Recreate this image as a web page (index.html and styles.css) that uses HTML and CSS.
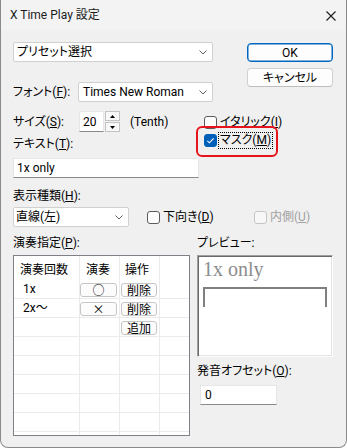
FILE: index.html
```html
<!DOCTYPE html>
<html lang="ja">
<head>
<meta charset="utf-8">
<link rel="stylesheet" href="styles.css">
</head>
<body>
<div class="window">
  <div class="titlebar">
    <span class="title">X Time Play 設定</span>
    <svg class="close" width="10" height="10" viewBox="0 0 10 10"><path d="M0.5 0.5 L9.5 9.5 M9.5 0.5 L0.5 9.5" stroke="#1b1b1b" stroke-width="1.1" fill="none"/></svg>
  </div>
  <div class="body">
    <div class="top">
      <div class="left">
        <div class="combo preset"><span>プリセット選択</span><svg class="chev" width="8" height="5" viewBox="0 0 8 5"><path d="M0.5 0.5 L4 4 L7.5 0.5" stroke="#606060" fill="none"/></svg></div>
        <div class="row font-row">
          <span class="lbl w65">フォント(<u>F</u>):</span>
          <div class="combo font-combo"><span>Times New Roman</span><svg class="chev" width="8" height="5" viewBox="0 0 8 5"><path d="M0.5 0.5 L4 4 L7.5 0.5" stroke="#606060" fill="none"/></svg></div>
        </div>
        <div class="mid">
          <div class="size-col">
            <div class="row size-row">
              <span class="lbl w66">サイズ(<u>S</u>):</span>
              <div class="edit size-edit">20</div>
              <div class="spin">
                <div class="spin-btn"><svg width="5" height="3" viewBox="0 0 5 3"><path d="M2.5 0 L5 3 L0 3 Z" fill="#000"/></svg></div>
                <div class="spin-btn"><svg width="5" height="3" viewBox="0 0 5 3"><path d="M0 0 L5 0 L2.5 3 Z" fill="#000"/></svg></div>
              </div>
              <span class="unit">(Tenth)</span>
            </div>
            <div class="lbl text-label">テキスト(<u>T</u>):</div>
          </div>
          <div class="checks">
            <div class="check"><span class="box"></span><span>イタリック(<u>I</u>)</span></div>
            <div class="check mask"><span class="box checked"><svg width="13" height="13" viewBox="0 0 13 13"><path d="M3.3 6.8 L5.4 8.8 L9.6 4.4" stroke="#fff" stroke-width="1.1" fill="none"/></svg></span><span class="focus">マスク(<u>M</u>)</span></div>
          </div>
        </div>
        <div class="edit text-edit">1x only</div>
      </div>
      <div class="buttons">
        <div class="btn ok">OK</div>
        <div class="btn">キャンセル</div>
      </div>
    </div>

    <div class="lbl disp-label">表示種類(<u>H</u>):</div>
    <div class="disp-row">
      <div class="combo disp-combo"><span>直線(左)</span><svg class="chev" width="8" height="5" viewBox="0 0 8 5"><path d="M0.5 0.5 L4 4 L7.5 0.5" stroke="#606060" fill="none"/></svg></div>
      <div class="check"><span class="box"></span><span>下向き(<u>D</u>)</span></div>
      <div class="check disabled"><span class="box"></span><span>内側(<u>U</u>)</span></div>
    </div>

    <div class="bottom">
      <div class="play-col">
        <div class="lbl sect-label">演奏指定(<u>P</u>):</div>
        <div class="grid">
          <div class="gr head"><div class="c c1">演奏回数</div><div class="c c2">演奏</div><div class="c c3">操作</div><div class="c c4"></div></div>
          <div class="gr"><div class="c c1 t">1x</div><div class="c c2"><div class="mini wide">○</div></div><div class="c c3"><div class="mini">削除</div></div><div class="c c4"></div></div>
          <div class="gr"><div class="c c1 t">2x〜</div><div class="c c2"><div class="mini wide">×</div></div><div class="c c3"><div class="mini">削除</div></div><div class="c c4"></div></div>
          <div class="gr"><div class="c c1"></div><div class="c c2"></div><div class="c c3"><div class="mini">追加</div></div><div class="c c4"></div></div>
          <div class="gr"><div class="c c1"></div><div class="c c2"></div><div class="c c3"></div><div class="c c4"></div></div>
          <div class="gr"><div class="c c1"></div><div class="c c2"></div><div class="c c3"></div><div class="c c4"></div></div>
          <div class="gr"><div class="c c1"></div><div class="c c2"></div><div class="c c3"></div><div class="c c4"></div></div>
          <div class="gr"><div class="c c1"></div><div class="c c2"></div><div class="c c3"></div><div class="c c4"></div></div>
          <div class="gr"><div class="c c1"></div><div class="c c2"></div><div class="c c3"></div><div class="c c4"></div></div>
          <div class="gr"><div class="c c1"></div><div class="c c2"></div><div class="c c3"></div><div class="c c4"></div></div>
        </div>
      </div>
      <div class="preview-col">
        <div class="lbl sect-label">プレビュー:</div>
        <div class="preview">
          <div class="pv-text">1x only</div>
          <div class="pv-mask"></div>
        </div>
        <div class="lbl offset-label">発音オフセット(<u>O</u>):</div>
        <div class="edit offset-edit">0</div>
      </div>
    </div>
  </div>
</div>
</body>
</html>
```

FILE: styles.css
```css
* { box-sizing: border-box; }
html, body { margin: 0; padding: 0; background: #ffffff; }
body {
  font-family: Roboto, "Noto Sans CJK JP", sans-serif;
  font-size: 12px;
  line-height: 16px;
  color: #000;
  font-feature-settings: "palt";
}
u { text-decoration: underline; text-underline-offset: 1px; text-decoration-thickness: 1px; }

.window {
  width: 347px;
  height: 448px;
  border: 1px solid #8a8a8a;
  border-top: none;
  border-radius: 0 0 8px 8px;
  background: #f0f0f0;
  overflow: hidden;
}
.titlebar {
  height: 30px;
  background: #f3f3f3;
  display: flex;
  align-items: center;
  justify-content: space-between;
  padding: 0 10px 0 9px;
}
.title { font-size: 12px; color: #1b1b1b; }
.close { display: block; margin-top: 1px; }

.body { padding: 12px 13px 0 12px; }

.top { display: flex; justify-content: space-between; }
.left { width: 200px; }
.buttons { width: 86px; margin-top: 1px; display: flex; flex-direction: column; gap: 6px; }
.btn {
  height: 19px;
  border: 1px solid #d0d0d0;
  border-bottom-color: #bdbdbd;
  border-radius: 4px;
  background: #fdfdfd;
  display: flex; align-items: center; justify-content: center;
  font-size: 12px;
}
.btn.ok { border-color: #0067c0; box-shadow: inset 0 0 0 0.5px #0067c0; }

.row { display: flex; align-items: center; }
.lbl { white-space: nowrap; }
.w65 { width: 65px; }
.w66 { width: 66px; }

.combo {
  height: 20px;
  background: #fff;
  border: 1px solid #d0d0d0;
  border-radius: 2px;
  display: flex; align-items: center; justify-content: space-between;
  padding: 0 5px 0 3px;
}
.chev { display: block; }
.preset { width: 200px; }
.font-row { margin-top: 20px; }
.font-combo { width: 135px; padding-left: 4px; }

.mid { display: grid; grid-template-columns: 191px auto; margin-top: 9px; }
.size-row { height: 21px; }
.edit {
  background: #fff;
  border: 1px solid #e6e6e6;
  border-bottom-color: #8a8a8a;
  display: flex; align-items: center;
  padding-left: 3px;
}
.size-edit { width: 25px; height: 21px; }
.spin { width: 15px; height: 21px; margin-left: 1px; display: flex; flex-direction: column; gap: 1px; }
.spin-btn {
  flex: 1;
  border: 1px solid #c4c4c4;
  background: #f8f8f8;
  display: flex; align-items: center; justify-content: center;
}
.spin-btn svg { display: block; }
.unit { margin-left: 10px; }
.text-label { margin-top: 4px; }

.checks { padding-top: 2px; }
.check { display: flex; align-items: center; height: 18px; gap: 3px; white-space: nowrap; }
.box {
  width: 13px; height: 13px;
  border: 1px solid #5c5c5c;
  border-radius: 3px;
  background: #fdfdfd;
  flex: none;
  display: block;
}
.box.checked { background: #005fb8; border-color: #005fb8; position: relative; }
.box.checked svg { position: absolute; left: -1px; top: -1px; }
.focus { outline: 1px dotted #000; outline-offset: 0; padding: 0 1px; margin-left: -1px; line-height: 15px; }
.mask { position: relative; }
.mask::after {
  content: "";
  position: absolute;
  left: -8px; top: -5px;
  width: 78px; height: 27px;
  border: 2px solid #e8141c;
  border-radius: 6px;
}
.check.disabled { color: #a0a0a0; }
.check.disabled .box { border-color: #c5c5c5; background: #f7f7f7; }

.text-edit { width: 186px; height: 20px; margin-top: 6px; }

.disp-label { margin-top: 10px; }
.disp-row { display: grid; grid-template-columns: 134px 107px auto; align-items: center; margin-top: 3px; }
.disp-combo { width: 116px; padding-left: 2px; }

.bottom { display: flex; gap: 7px; margin-top: 8px; }
.play-col { width: 177px; }
.sect-label { height: 16px; }
.grid {
  margin-top: 4px;
  height: 181px;
  border: 1px solid #7f8087;
  background: #fff;
  overflow: hidden;
}
.gr { display: grid; grid-template-columns: 66px 40px 40px 1fr; height: 19px; border-bottom: 1px solid #ebebeb; }
.gr.head { height: 24px; border-bottom: none; }
.c { border-right: 1px solid #ebebeb; }
.c4 { border-right: none; }
.head .c { padding-top: 6px; line-height: 16px; }
.head .c1 { padding-left: 6px; }
.head .c2 { padding-left: 6px; }
.head .c3 { padding-left: 5px; }
.t { padding-left: 9px; line-height: 18px; }
.c3 { padding-left: 1px; }
.mini {
  margin-top: 3px;
  width: 36px; height: 14px;
  border: 1px solid #c6c6c6;
  border-radius: 3px;
  background: #fcfcfc;
  display: flex; align-items: center; justify-content: center;
  line-height: 12px;
  font-family: "Noto Sans CJK JP", sans-serif;
  font-feature-settings: normal;
}
.mini.wide { width: 37px; }

.preview-col { width: 136px; }
.preview {
  margin-top: 4px;
  height: 102px;
  background: #fff;
  border-style: solid;
  border-width: 1px;
  border-color: #a0a0a0 #ffffff #ffffff #a0a0a0;
  box-shadow: inset 1px 1px 0 #696969, inset -1px -1px 0 #e3e3e3;
  padding: 1px 0 0 5px;
}
.pv-text {
  font-family: "Liberation Serif", serif;
  font-size: 20px;
  line-height: 24px;
  color: #8c8c8c;
  font-feature-settings: normal;
}
.pv-mask {
  margin-top: 6px;
  width: 124px; height: 20px;
  border: 2px solid #808080;
  border-bottom: none;
}
.offset-label { margin-top: 6px; }
.offset-edit { margin-top: 6px; margin-left: 3px; width: 77px; height: 20px; padding-left: 4px; }
```
